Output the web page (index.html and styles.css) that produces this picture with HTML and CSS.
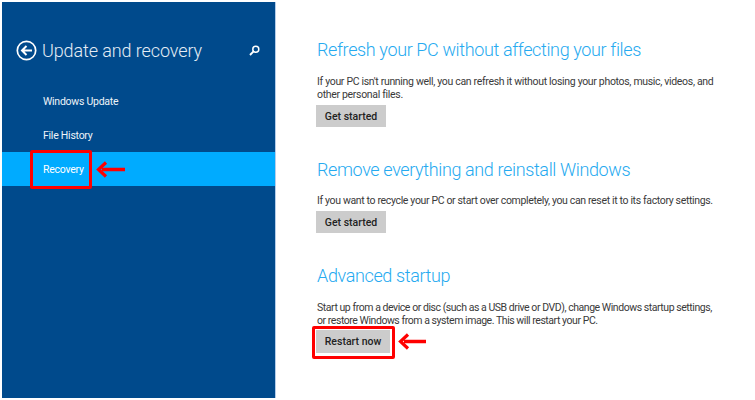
FILE: index.html
```html
<!DOCTYPE html>
<html lang="en">
<head>
<meta charset="utf-8">
<title>Update and recovery</title>
<link rel="stylesheet" href="styles.css">
</head>
<body>
<div class="screen">
  <aside class="sidebar">
    <header class="side-head">
      <svg class="back" width="21" height="21" viewBox="0 0 21 21" aria-hidden="true"><circle cx="10.500" cy="10.500" r="9.200" fill="none" stroke="#fff" stroke-width="1.700"/><path d="M16 10.500H6.500M10.500 6l-4.500 4.500 4.500 4.500" fill="none" stroke="#fff" stroke-width="2"/></svg>
      <h1 class="side-title">Update and recovery</h1>
      <svg class="search" width="11" height="11" viewBox="0 0 11 11" aria-hidden="true"><circle cx="6.800" cy="4.200" r="3" fill="none" stroke="#fff" stroke-width="1.500"/><path d="M4.800 6.200L1 10" stroke="#fff" stroke-width="1.900"/></svg>
    </header>
    <nav class="nav">
      <div class="nav-item">Windows Update</div>
      <div class="nav-item">File History</div>
      <div class="nav-item selected">
        <span class="nav-label">Recovery</span>
        <span class="mark mark-nav"></span>
        <svg class="arrow arrow-nav" width="30" height="17" viewBox="0 0 30 17" aria-hidden="true"><path d="M30 8.500H7" stroke="#f00" stroke-width="3.500"/><path d="M11 1.500L3.500 8.500l7.500 7" fill="none" stroke="#f00" stroke-width="3.200"/></svg>
      </div>
    </nav>
  </aside>
  <main class="content">
    <section class="block block-one">
      <h2 class="heading">Refresh your PC without affecting your files</h2>
      <p class="text text-one">If your PC isn't running well, you can refresh it without losing your photos, music, videos, and<br>other personal files.</p>
      <button class="btn">Get started</button>
    </section>
    <section class="block block-two">
      <h2 class="heading">Remove everything and reinstall Windows</h2>
      <p class="text text-two">If you want to recycle your PC or start over completely, you can reset it to its factory settings.</p>
      <button class="btn">Get started</button>
    </section>
    <section class="block block-three">
      <h2 class="heading">Advanced startup</h2>
      <p class="text text-three">Start up from a device or disc (such as a USB drive or DVD), change Windows startup settings,<br>or restore Windows from a system image. This will restart your PC.</p>
      <div class="btn-row">
        <button class="btn btn-marked">Restart now<span class="mark mark-btn"></span></button>
        <svg class="arrow arrow-btn" width="28" height="17" viewBox="0 0 28 17" aria-hidden="true"><path d="M28 8.500H6" stroke="#f00" stroke-width="3.500"/><path d="M10 1.500L2.500 8.500l7.500 7" fill="none" stroke="#f00" stroke-width="3.200"/></svg>
      </div>
    </section>
  </main>
</div>
</body>
</html>
```
FILE: styles.css
```css
html, body {
  margin: 0;
  padding: 0;
  background: #fff;
}
.screen {
  display: flex;
  width: 755px;
  height: 400px;
  padding: 2px 0 2px 2px;
  box-sizing: border-box;
  font-family: Roboto, "Open Sans", sans-serif;
}
.sidebar {
  width: 273px;
  flex: none;
  background: #004a8c;
  border-right: 1px solid #b5cdea;
  color: #fff;
}
.side-head {
  display: flex;
  align-items: center;
  height: 21px;
  margin-top: 38px;
  padding-left: 14px;
}
.back { flex: none; }
.side-title {
  margin: 0 0 0 5px;
  font-size: 18px;
  font-weight: 300;
  letter-spacing: -0.100px;
  line-height: 21px;
  white-space: nowrap;
  color: #e4edf5;
}
.search {
  flex: none;
  margin-left: auto;
  margin-right: 15px;
}
.nav {
  margin-top: 23px;
}
.nav-item {
  position: relative;
  height: 34px;
  padding-left: 41px;
  font-size: 10.500px;
  letter-spacing: -0.250px;
  line-height: 36px;
  color: #eef3f8;
}
.selected {
  background: #00abff;
  color: #fff;
}
.mark {
  position: absolute;
  border: 3px solid #f00;
  border-radius: 2px;
  box-sizing: border-box;
  pointer-events: none;
}
.mark-nav {
  left: 28px;
  top: -2px;
  width: 62px;
  height: 39px;
}
.arrow { display: block; }
.arrow-nav {
  position: absolute;
  left: 93px;
  top: 9px;
}
.content {
  flex: 1;
  padding-left: 41px;
  min-width: 0;
}
.block { width: 410px; }
.block-one { margin-top: 36px; }
.block-two { margin-top: 31px; }
.block-three { margin-top: 31px; }
.heading {
  margin: 0;
  font-size: 18px;
  font-weight: 300;
  letter-spacing: -0.370px;
  line-height: 24px;
  color: #26aaf0;
  white-space: nowrap;
}
.text {
  margin: 13px 0 0;
  font-size: 10.500px;
  line-height: 13px;
  color: #3a3a3a;
  white-space: nowrap;
}
.text-one { letter-spacing: -0.320px; }
.text-two {
  margin-top: 12px;
  letter-spacing: -0.350px;
}
.text-three { letter-spacing: -0.450px; }
.btn {
  position: relative;
  display: block;
  width: 70px;
  height: 22px;
  margin: 4px 0 0 -1px;
  padding: 0;
  border: 0;
  background: #cccccc;
  font-family: inherit;
  font-size: 10.500px;
  font-weight: 500;
  color: #222;
}
.btn-row {
  display: flex;
  align-items: center;
}
.btn-marked {
  width: 74px;
  height: 23px;
  margin-top: 3px;
}
.mark-btn {
  left: -4px;
  top: -4px;
  width: 83px;
  height: 33px;
}
.arrow-btn {
  margin: 3px 0 0 8px;
}
```
